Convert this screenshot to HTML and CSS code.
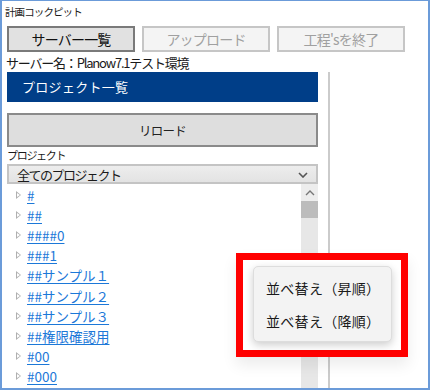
FILE: index.html
```html
<!DOCTYPE html>
<html lang="ja">
<head>
  <meta charset="UTF-8">
  <title>計画コックピット</title>
  <link rel="stylesheet" href="styles.css">
</head>
<body>
  <div class="window">
    <div class="title">計画コックピット</div>

    <div class="toolbar">
      <button class="btn btn-active">サーバー一覧</button>
      <button class="btn btn-disabled">アップロード</button>
      <button class="btn btn-disabled">工程'sを終了</button>
    </div>

    <div class="server-name">サーバー名：Planow7.1テスト環境</div>

    <div class="pane-row">
      <div class="left-pane">
        <div class="pane-header">プロジェクト一覧</div>
        <button class="reload-btn">リロード</button>
        <div class="field-label">プロジェクト</div>
        <div class="select">
          <span>全てのプロジェクト</span>
          <svg class="chevron" width="10" height="6" viewBox="0 0 10 6"><path d="M1 1 L5 5 L9 1" fill="none" stroke="#555" stroke-width="1.6"/></svg>
        </div>
        <div class="tree">
          <ul class="tree-list">
            <li class="tree-item"><span class="twisty"></span><a href="#">#</a></li>
            <li class="tree-item"><span class="twisty"></span><a href="#">##</a></li>
            <li class="tree-item"><span class="twisty"></span><a href="#">####0</a></li>
            <li class="tree-item"><span class="twisty"></span><a href="#">###1</a></li>
            <li class="tree-item"><span class="twisty"></span><a href="#">##サンプル１</a></li>
            <li class="tree-item"><span class="twisty"></span><a href="#">##サンプル２</a></li>
            <li class="tree-item"><span class="twisty"></span><a href="#">##サンプル３</a></li>
            <li class="tree-item"><span class="twisty"></span><a href="#">##権限確認用</a></li>
            <li class="tree-item"><span class="twisty"></span><a href="#">#00</a></li>
            <li class="tree-item"><span class="twisty"></span><a href="#">#000</a></li>
          </ul>
          <div class="scrollbar">
            <div class="scroll-up">
              <svg width="10" height="6" viewBox="0 0 10 6"><path d="M1 5 L5 1 L9 5" fill="none" stroke="#777" stroke-width="1.4"/></svg>
            </div>
            <div class="scroll-thumb"></div>
          </div>
        </div>
      </div>
      <div class="divider"></div>
    </div>

    <!-- annotation box with the context menu -->
    <div class="callout">
      <div class="context-menu">
        <div class="menu-item">並べ替え（昇順）</div>
        <div class="menu-item">並べ替え（降順）</div>
      </div>
    </div>
  </div>
</body>
</html>
```

FILE: styles.css
```css
* {
  margin: 0;
  padding: 0;
  box-sizing: border-box;
}

body {
  width: 430px;
  height: 390px;
  overflow: hidden;
  background: #ffffff;
  font-family: "Noto Sans CJK JP", "Noto Sans", sans-serif;
  color: #1a1a1a;
}

.window {
  position: relative;
  width: 430px;
  height: 390px;
  border: 2px solid #6b9bd9;
  border-top-width: 1px;
  background: #ffffff;
  overflow: hidden;
}

.title {
  height: 25px;
  padding-left: 3px;
  font-size: 10.5px;
  line-height: 22px;
  letter-spacing: -0.9px;
}

.toolbar {
  display: flex;
  gap: 7px;
  padding-left: 5px;
  height: 28px;
}

.btn {
  width: 128px;
  height: 26px;
  font-family: inherit;
  font-size: 14px;
  line-height: 22px;
  letter-spacing: -0.8px;
}

.btn-active {
  background: #e1e1e1;
  border: 2px solid #7a7a7a;
  color: #111;
}

.btn-disabled {
  background: #f4f4f4;
  border: 2px solid #c6c6c6;
  color: #a0a0a0;
}

.server-name {
  height: 18px;
  padding-left: 4px;
  font-size: 13px;
  line-height: 18px;
  letter-spacing: -1.2px;
}

.pane-row {
  display: flex;
  height: 316px;
}

.left-pane {
  width: 316px;
  padding-left: 5px;
  display: flex;
  flex-direction: column;
}

.pane-header {
  height: 30px;
  background: #003e88;
  color: #ffffff;
  font-size: 13px;
  line-height: 30px;
  padding-left: 15px;
  letter-spacing: 0.3px;
}

.reload-btn {
  margin-top: 11px;
  height: 34px;
  background: #dedede;
  border: 2px solid #8a8a8a;
  font-family: inherit;
  font-size: 12.5px;
  letter-spacing: -0.8px;
  color: #222;
}

.field-label {
  height: 17px;
  font-size: 11px;
  line-height: 17px;
  letter-spacing: -1.3px;
}

.select {
  height: 20px;
  display: flex;
  align-items: center;
  justify-content: space-between;
  padding: 0 8px 0 8px;
  background: linear-gradient(#ededed, #e3e3e3);
  border: 2px solid #c4c4c4;
  font-size: 13px;
  letter-spacing: -1.5px;
}

.chevron {
  margin-top: 1px;
}

.tree {
  flex: 1;
  display: flex;
}

.tree-list {
  flex: 1;
  list-style: none;
  padding-top: 1px;
}

.tree-item {
  height: 20.1px;
  display: flex;
  align-items: center;
  padding-left: 9px;
  font-size: 13.5px;
}

.twisty {
  width: 0;
  height: 0;
  border-left: 5px solid #b0b0b0;
  border-top: 4px solid transparent;
  border-bottom: 4px solid transparent;
  margin-right: 6px;
  position: relative;
}

.twisty::after {
  content: "";
  position: absolute;
  left: -4px;
  top: -2px;
  border-left: 3px solid #ffffff;
  border-top: 2px solid transparent;
  border-bottom: 2px solid transparent;
}

.tree-item a {
  color: #1c78d8;
  text-decoration: underline;
  text-underline-offset: 2px;
  line-height: 18px;
}

.scrollbar {
  width: 17px;
  background: #e7e7e7;
}

.scroll-up {
  height: 17px;
  display: flex;
  align-items: center;
  justify-content: center;
  background: #ededed;
}

.scroll-thumb {
  height: 17px;
  background: #bcbcbc;
}

.divider {
  width: 2px;
  margin-left: 10px;
  background: #cbcbcb;
}

.callout {
  position: absolute;
  left: 234px;
  top: 252px;
  width: 172px;
  height: 104px;
  border: 7px solid #ff0000;
  background: #ffffff;
  box-shadow: 0 8px 14px rgba(0, 0, 0, 0.08);
}

.context-menu {
  position: absolute;
  left: 10px;
  top: 6px;
  width: 139px;
  height: 76px;
  background: #f3f3f3;
  border: 1px solid #dddddd;
  border-radius: 5px;
  box-shadow: 0 3px 8px rgba(0, 0, 0, 0.2);
  padding-top: 8px;
}

.menu-item {
  height: 33px;
  line-height: 26px;
  padding-left: 12px;
  font-size: 14px;
  letter-spacing: 0.3px;
  color: #1a1a1a;
}
```
